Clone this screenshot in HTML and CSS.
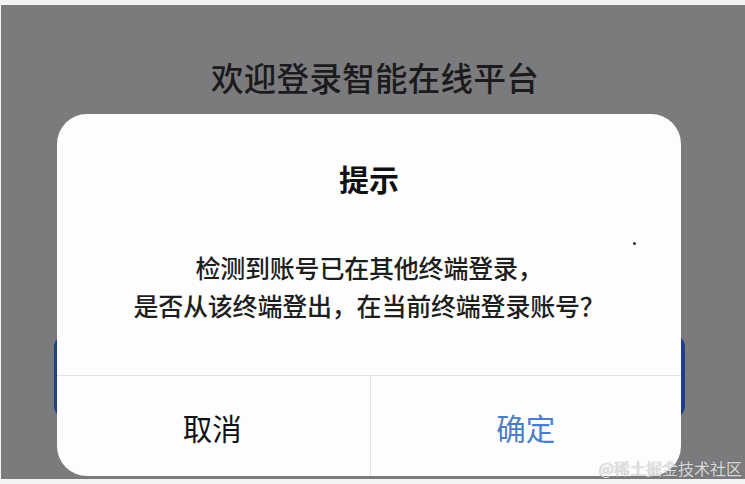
FILE: index.html
```html
<!DOCTYPE html>
<html lang="zh">
<head>
<meta charset="utf-8">
<link rel="stylesheet" href="styles.css">
</head>
<body>
<div class="screen">
  <h1 class="page-title">欢迎登录智能在线平台</h1>
  <div class="login-btn"></div>
  <div class="dialog">
    <div class="dialog-body">
      <div class="dialog-title">提示</div>
      <p class="dialog-msg">检测到账号已在其他终端登录，<br>是否从该终端登出，在当前终端登录账号？</p>
    </div>
    <div class="dialog-footer">
      <div class="btn btn-cancel">取消</div>
      <div class="btn btn-ok">确定</div>
    </div>
    <span class="speck"></span>
  </div>
  <div class="watermark">@稀土掘金技术社区</div>
</div>
</body>
</html>
```
FILE: styles.css
```css
html, body {
  margin: 0;
  padding: 0;
}
body {
  width: 745px;
  height: 484px;
  background: #f3f3f3;
  overflow: hidden;
  font-family: "Noto Sans CJK SC", "Noto Sans", sans-serif;
}
.screen {
  position: relative;
  margin: 5px 0 0 1px;
  height: 474px;
  background: #7b7b7d;
  display: flex;
  flex-direction: column;
  align-items: center;
}
.page-title {
  margin: 52px 0 0 0;
  font-size: 32.5px;
  line-height: 40px;
  font-weight: 500;
  color: #1b1b1d;
  letter-spacing: 0.3px;
  padding-left: 4px;
}
.login-btn {
  align-self: flex-start;
  margin: 238px 0 0 53px;
  width: 631px;
  height: 83px;
  border-radius: 12px;
  background: #1f3e8c;
}
.dialog {
  position: absolute;
  left: 56px;
  top: 109px;
  width: 624px;
  height: 362px;
  background: #fdfdfd;
  border-radius: 30px;
  display: flex;
  flex-direction: column;
  overflow: hidden;
}
.dialog-body {
  height: 261px;
  display: flex;
  flex-direction: column;
  align-items: center;
}
.dialog-title {
  margin-top: 44px;
  font-size: 30px;
  line-height: 40px;
  font-weight: 700;
  color: #111;
}
.dialog-msg {
  margin: 50px 0 0 0;
  font-size: 25px;
  line-height: 38px;
  font-weight: 500;
  color: #1e1e1e;
  text-align: center;
  letter-spacing: -0.2px;
}
.dialog-footer {
  flex: 1;
  display: flex;
  border-top: 1px solid #e2e2e2;
}
.btn {
  flex: 1;
  display: flex;
  align-items: center;
  justify-content: center;
  font-size: 29.5px;
  padding-top: 2px;
}
.btn-cancel {
  color: #111;
  border-right: 1px solid #e2e2e2;
  padding-right: 2px;
}
.btn-ok {
  color: #4a7ec6;
}
.speck {
  position: absolute;
  left: 576px;
  top: 128px;
  width: 3px;
  height: 3px;
  border-radius: 50%;
  background: #333;
}
.watermark {
  position: absolute;
  right: 3px;
  bottom: 0px;
  font-size: 16px;
  line-height: 22px;
  color: rgba(240, 240, 240, 0.85);
  text-shadow: 0 0 1px rgba(80, 80, 80, 0.6);
  font-family: "Noto Sans CJK SC", sans-serif;
}
```
